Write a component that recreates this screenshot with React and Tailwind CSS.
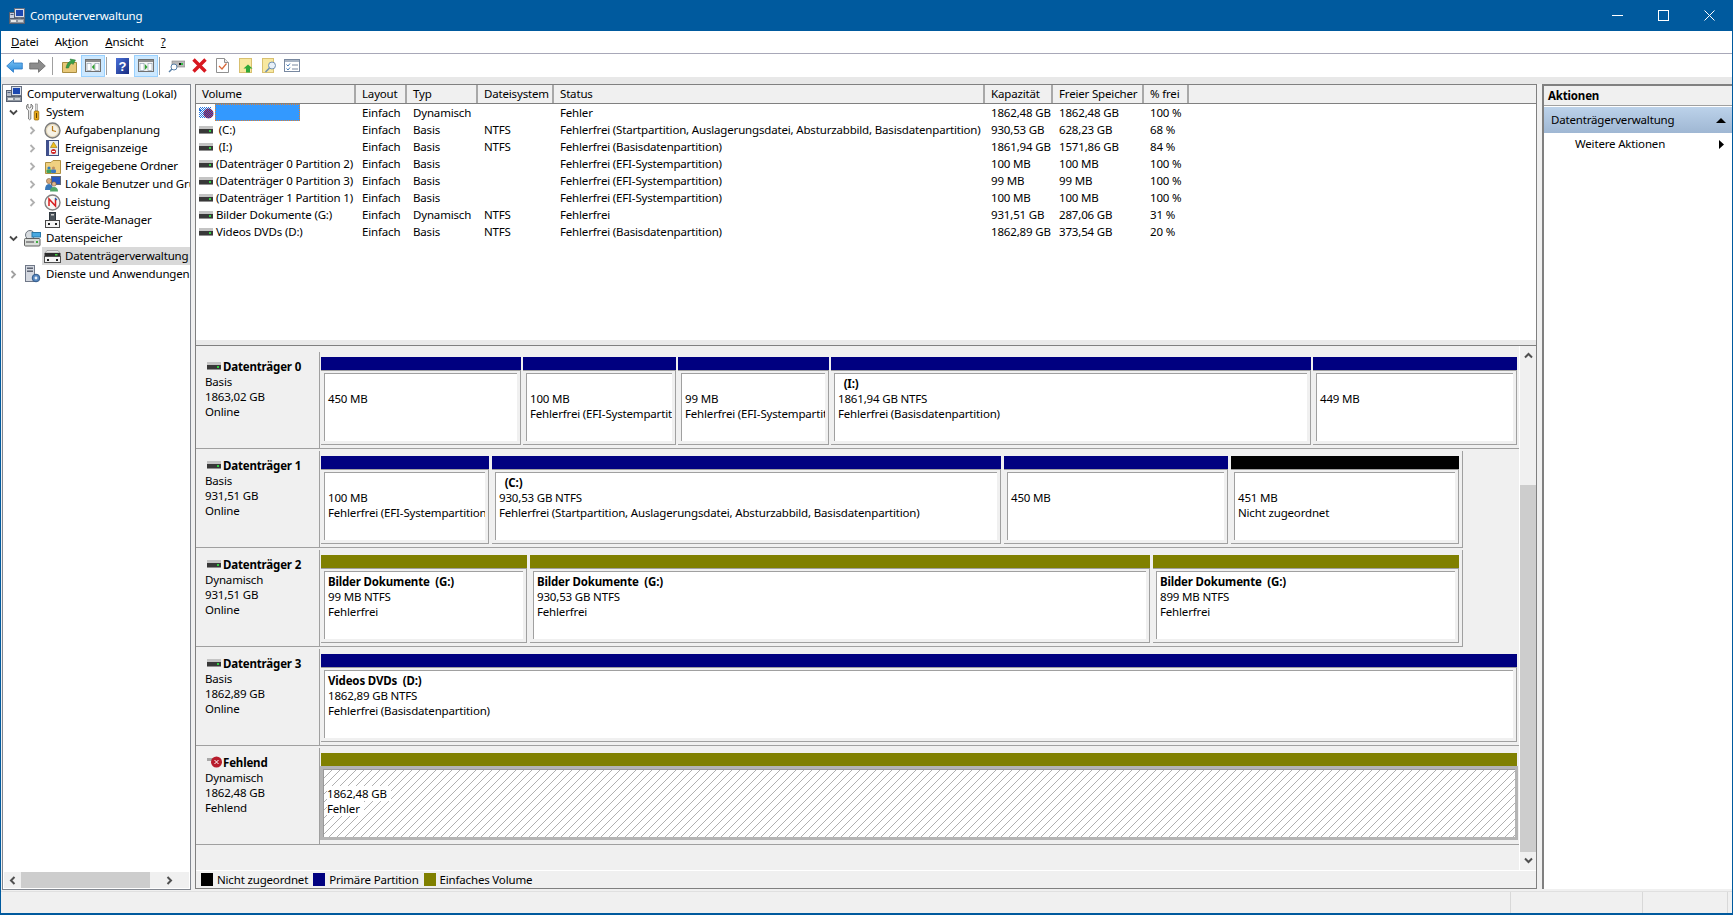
import React from 'react';

const Chevron = ({ open, dark }) => (
  <svg width="9" height="9" viewBox="0 0 9 9" className="shrink-0">
    {open ? (
      <polyline points="1,2.5 4.5,6 8,2.5" fill="none" stroke="#484848" strokeWidth="1.8" />
    ) : (
      <polyline points="2.5,1 6,4.5 2.5,8" fill="none" stroke={dark ? '#a0a0a0' : '#b0b0b0'} strokeWidth="1.8" />
    )}
  </svg>
);

const CompIcon = ({ light }) => (
  <svg width="16" height="16" viewBox="0 0 16 16" className="shrink-0">
    <rect x="5.5" y="0.5" width="10" height="9" fill="#d8e0ec" stroke="#687080" />
    <rect x="7" y="2" width="7" height="6" fill="#1c48b0" />
    <rect x="0.5" y="4.5" width="5" height="6" fill={light ? '#c8d0e0' : '#b8bec8'} stroke="#586070" />
    <rect x="1.5" y="6" width="3" height="1" fill="#506080" />
    <rect x="0.5" y="10.5" width="15" height="5" fill="#8e96a0" stroke="#586070" />
    <rect x="2" y="12" width="5" height="2" fill="#e8e8e8" />
    <rect x="9" y="12" width="5" height="2" fill="#d0d4d8" />
    <rect x="9" y="9.5" width="3" height="1.2" fill="#707880" />
  </svg>
);
const ToolsIcon = () => (
  <svg width="14" height="18" viewBox="0 0 14 18" className="shrink-0">
    <path d="M2 1 L2 4 L3.5 5 L5 4 L5 1 L6.8 3 L6.4 6 L4.8 7.5 L4.8 16 Q3.5 17.5 2.6 16 L2.6 7.5 L.8 6 L.4 3 Z" fill="#f0f0f0" stroke="#606060" strokeWidth=".8" />
    <rect x="9.5" y="1" width="2" height="7" fill="#d8d8d8" stroke="#808080" strokeWidth=".5" />
    <rect x="8.2" y="8" width="4.6" height="9" rx="1" fill="#e8a818" stroke="#906000" strokeWidth=".7" />
    <rect x="10" y="10" width="1" height="5" fill="#604000" />
  </svg>
);
const ClockIcon = () => (
  <svg width="17" height="17" viewBox="0 0 17 17" className="shrink-0">
    <circle cx="8.5" cy="8.5" r="7.5" fill="#e4d8bc" stroke="#7c7c7c" strokeWidth="1.4" />
    <circle cx="8.5" cy="8.5" r="5.5" fill="#f6f2e6" />
    <polyline points="8.5,4 8.5,8.5 12,9.5" fill="none" stroke="#b87818" strokeWidth="1.2" />
  </svg>
);
const LogIcon = () => (
  <svg width="15" height="16" viewBox="0 0 15 16" className="shrink-0">
    <rect x="1.5" y="0.5" width="12" height="15" fill="#e8ecf4" stroke="#405080" />
    <rect x="1.5" y="0.5" width="2.5" height="15" fill="#405090" />
    <path d="M8.5 2 L12 7.5 L5.5 7.5 Z" fill="#f0c020" stroke="#806000" strokeWidth=".5" />
    <circle cx="8.5" cy="11.5" r="2.5" fill="#d02828" />
    <rect x="7" y="11" width="3" height="1" fill="#fff" />
  </svg>
);
const SharedIcon = () => (
  <svg width="16" height="15" viewBox="0 0 16 15" className="shrink-0">
    <path d="M.5 3.5 L.5 14.5 L15.5 14.5 L15.5 1.5 L8 1.5 L6 3.5 Z" fill="#f0d080" stroke="#b09040" />
    <circle cx="4" cy="9" r="1.6" fill="#3080c0" />
    <rect x="1.5" y="10.5" width="5" height="3.5" rx="1" fill="#40a060" />
    <circle cx="8.5" cy="9" r="1.6" fill="#c09060" />
    <rect x="6" y="10.5" width="5" height="3.5" rx="1" fill="#3878c0" />
  </svg>
);
const UsersIcon = () => (
  <svg width="17" height="16" viewBox="0 0 17 16" className="shrink-0">
    <rect x="7.5" y="0.5" width="9" height="8" fill="#2858c0" stroke="#606878" />
    <circle cx="5" cy="5" r="2.6" fill="#d8a878" stroke="#705030" strokeWidth=".5" />
    <path d="M1 14 Q1 8 5 8 Q9 8 9 14 Z" fill="#3878b8" />
    <circle cx="10" cy="8" r="2.2" fill="#e0b890" stroke="#705030" strokeWidth=".5" />
    <path d="M6 15.5 Q6 11 10 11 Q14 11 14 15.5 Z" fill="#50a868" />
  </svg>
);
const GaugeIcon = () => (
  <svg width="17" height="17" viewBox="0 0 17 17" className="shrink-0">
    <circle cx="8.5" cy="8.5" r="7.5" fill="#f8f8f4" stroke="#808080" strokeWidth="1.4" />
    <path d="M5 12 L5 5 L11.5 12 L11.5 5" fill="none" stroke="#d82020" strokeWidth="1.5" />
    <path d="M11 4 L13 6" stroke="#2060c0" strokeWidth="1.2" />
  </svg>
);
const DeviceIcon = () => (
  <svg width="15" height="16" viewBox="0 0 15 16" className="shrink-0">
    <rect x="4.5" y="0.5" width="6" height="8" fill="#4c545c" stroke="#303840" />
    <rect x="6" y="2" width="3" height="1.5" fill="#d0d0d0" />
    <rect x="0.5" y="8.5" width="14" height="7" fill="#f4f4f4" stroke="#484848" />
    <rect x="3" y="11" width="2" height="2" fill="#202020" />
    <rect x="10" y="11" width="2" height="2" fill="#202020" />
  </svg>
);
const StorageIcon = () => (
  <svg width="17" height="17" viewBox="0 0 17 17" className="shrink-0">
    <circle cx="6" cy="5" r="4.5" fill="#d8dce0" stroke="#707880" />
    <rect x="8" y="2.5" width="8.5" height="4.5" fill="#48a8e0" stroke="#2878a8" />
    <rect x="0.5" y="8.5" width="15.5" height="7.5" rx="1" fill="#d8dcd8" stroke="#606060" />
    <rect x="2" y="11" width="8" height="2" fill="#909090" />
    <rect x="12" y="11" width="2" height="2" fill="#40b040" />
  </svg>
);
const DiskBig = () => (
  <svg width="17" height="13" viewBox="0 0 17 13" className="shrink-0">
    <path d="M3 .5 L14 .5 L16 3 L1 3 Z" fill="#e8e8e8" stroke="#909090" strokeWidth=".7" />
    <rect x="0.5" y="3" width="16" height="3.5" fill="#2c2c2c" />
    <rect x="11" y="4" width="2.5" height="1.5" fill="#40d040" />
    <rect x="0.5" y="6.5" width="16" height="6" fill="#f4f4f4" stroke="#505050" />
    <rect x="3" y="9" width="2" height="2" fill="#202020" />
    <rect x="12" y="9" width="2" height="2" fill="#202020" />
  </svg>
);
const ServicesIcon = () => (
  <svg width="17" height="18" viewBox="0 0 17 18" className="shrink-0">
    <rect x="1.5" y="0.5" width="9" height="16" fill="#d4d8e0" stroke="#707888" />
    <rect x="3" y="2.5" width="6" height="1.4" fill="#505868" />
    <rect x="3" y="5.5" width="6" height="1.4" fill="#505868" />
    <circle cx="12" cy="13" r="3.8" fill="#5888c0" stroke="#305888" />
    <circle cx="12" cy="13" r="1.4" fill="#e8f0f8" />
  </svg>
);
const Drive = () => (
  <svg width="14" height="8" viewBox="0 0 14 8" className="shrink-0">
    <rect x="0" y="0" width="14" height="3" fill="#c4c4c4" />
    <rect x="0" y="3" width="14" height="4" fill="#383838" />
    <rect x="0" y="7" width="14" height="1" fill="#909090" />
    <rect x="10" y="4" width="2" height="2" fill="#30d040" />
  </svg>
);
const MissingVol = () => (
  <svg width="16" height="14" viewBox="0 0 16 14" className="shrink-0">
    <defs>
      <pattern id="dith" width="2" height="2" patternUnits="userSpaceOnUse">
        <rect width="1" height="1" fill="#2878e0" />
        <rect x="1" y="1" width="1" height="1" fill="#2878e0" />
      </pattern>
      <pattern id="dith2" width="2" height="2" patternUnits="userSpaceOnUse">
        <rect width="2" height="2" fill="#a81430" />
        <rect x="1" width="1" height="1" fill="#3068d8" />
        <rect y="1" width="1" height="1" fill="#3068d8" />
      </pattern>
    </defs>
    <rect x="0" y="1" width="12" height="11" fill="url(#dith)" />
    <rect x="0" y="3" width="2" height="2" fill="#2878e0" />
    <circle cx="9.5" cy="7.5" r="5" fill="url(#dith2)" />
  </svg>
);
const MissingDisk = () => (
  <svg width="15" height="12" viewBox="0 0 15 12" className="shrink-0">
    <rect x="0" y="2" width="7" height="3" fill="#a8a8a8" />
    <circle cx="9.5" cy="6" r="5.5" fill="#b81c2c" />
    <path d="M7.5 4 L11.5 8 M11.5 4 L7.5 8" stroke="#fff" strokeWidth="1" />
  </svg>
);

const ToolBtn = ({ active, className = '', children }) => (
  <div className={`h-[22px] flex items-center justify-center ${active ? 'bg-[#cce8ff] border border-[#99d1ff]' : ''} ${className}`}>{children}</div>
);
const Sep = ({ className = '' }) => <div className={`w-px h-[18px] bg-[#a0a0a0] ${className}`} />;

const WindowGlyph = ({ dir }) => (
  <svg width="16" height="13" viewBox="0 0 16 13">
    <rect x=".5" y=".5" width="15" height="12" fill="#f4f4f4" stroke="#707070" />
    <rect x="1" y="1" width="14" height="2" fill="#8c8c8c" />
    <rect x="2" y="4.5" width="4" height="7" fill="#fff" stroke="#8898a8" strokeWidth=".6" />
    <rect x="10" y="4.5" width="4" height="7" fill="#fff" stroke="#8898a8" strokeWidth=".6" />
    {dir === 'l' ? <path d="M9.5 5 L6.8 8 L9.5 11 Z" fill="#30a030" /> : <path d="M6.8 5 L9.5 8 L6.8 11 Z" fill="#30a030" />}
  </svg>
);

const Toolbar = () => (
  <div className="h-[23px] bg-white flex items-center pl-[5px]">
    <svg width="17" height="14" viewBox="0 0 17 14">
      <defs>
        <linearGradient id="bl" x1="0" y1="0" x2="0" y2="1"><stop offset="0" stopColor="#7cc4f4" /><stop offset="1" stopColor="#2a88d8" /></linearGradient>
      </defs>
      <path d="M.7 7 L7.5 .7 L7.5 4 L16.3 4 L16.3 10 L7.5 10 L7.5 13.3 Z" fill="url(#bl)" stroke="#2878c8" strokeWidth=".8" />
    </svg>
    <svg width="17" height="14" viewBox="0 0 17 14" className="ml-[6px]">
      <path d="M16.3 7 L9.5 .7 L9.5 4 L.7 4 L.7 10 L9.5 10 L9.5 13.3 Z" fill="#8c8c8c" stroke="#686868" strokeWidth=".8" />
    </svg>
    <Sep className="ml-[6px]" />
    <svg width="15" height="15" viewBox="0 0 15 15" className="ml-[9px]">
      <path d="M.5 4.5 L.5 14.5 L14.5 14.5 L14.5 4.5 Z" fill="#e8c878" stroke="#a88c40" />
      <path d="M4 10 Q5 4 9 3 L8 1 L13.5 2 L11 6.5 L10 5 Q7.5 6 6.5 10 Z" fill="#38a048" stroke="#207030" strokeWidth=".5" />
    </svg>
    <ToolBtn active className="w-[24px] ml-[4px]"><WindowGlyph dir="l" /></ToolBtn>
    <Sep className="ml-[1px]" />
    <svg width="13" height="16" viewBox="0 0 13 16" className="ml-[9px]">
      <defs>
        <linearGradient id="hp" x1="0" y1="0" x2="1" y2="1"><stop offset="0" stopColor="#4a70d8" /><stop offset="1" stopColor="#182c80" /></linearGradient>
      </defs>
      <rect width="13" height="16" fill="url(#hp)" />
      <text x="6.5" y="12.5" textAnchor="middle" fontSize="13" fontWeight="700" fill="#fff" fontFamily="Liberation Sans">?</text>
    </svg>
    <ToolBtn active className="w-[24px] ml-[5px]"><WindowGlyph dir="r" /></ToolBtn>
    <Sep className="ml-[1px]" />
    <svg width="17" height="14" viewBox="0 0 17 14" className="ml-[8px]">
      <rect x="4" y="2" width="13" height="6" fill="#b8b8b8" stroke="#808080" strokeWidth=".6" />
      <rect x="11" y="4" width="4" height="2" fill="#101010" />
      <rect x="13" y="4" width="2" height="2" fill="#30c040" />
      <circle cx="6" cy="8" r="3" fill="#fff" stroke="#5880a8" />
      <path d="M4 10 L1 13" stroke="#5880a8" strokeWidth="1.5" />
    </svg>
    <svg width="15" height="15" viewBox="0 0 15 15" className="ml-[7px]">
      <path d="M1.5 1.5 L13.5 13.5 M13.5 1.5 L1.5 13.5" stroke="#d81820" strokeWidth="3.4" />
    </svg>
    <svg width="13" height="15" viewBox="0 0 13 15" className="ml-[9px]">
      <path d="M.5 .5 L8.5 .5 L12.5 4.5 L12.5 14.5 L.5 14.5 Z" fill="#fff" stroke="#909090" />
      <path d="M8.5 .5 L8.5 4.5 L12.5 4.5" fill="#e8e8e8" stroke="#909090" />
      <path d="M3 8 L6 11 L10.5 5.5" fill="none" stroke="#d86838" strokeWidth="1.2" />
    </svg>
    <svg width="14" height="15" viewBox="0 0 14 15" className="ml-[10px]">
      <rect x=".5" y=".5" width="12" height="14" fill="#f8e8a0" stroke="#d8c070" />
      <path d="M9 6.5 L13.5 10.5 L11 10.5 L11 14.5 L7 14.5 L7 10.5 L4.5 10.5 Z" fill="#30a838" />
    </svg>
    <svg width="15" height="15" viewBox="0 0 15 15" className="ml-[9px]">
      <rect x=".5" y=".5" width="11" height="14" fill="#f8e8a0" stroke="#d8c070" />
      <circle cx="10" cy="7.5" r="3.5" fill="#e8f0f8" stroke="#7090b0" />
      <path d="M7.5 10 L3.5 14" stroke="#7090b0" strokeWidth="1.6" />
    </svg>
    <svg width="16" height="13" viewBox="0 0 16 13" className="ml-[7px]">
      <rect x=".5" y=".5" width="15" height="12" fill="#fff" stroke="#7888a0" />
      <rect x="1" y="1" width="14" height="2" fill="#a8b4c4" />
      <path d="M2.5 5.5 L4 7 L6 4.5 M2.5 9.5 L4 11 L6 8.5" fill="none" stroke="#3870b0" strokeWidth=".9" />
      <path d="M8 6 L14 6 M8 10 L14 10" stroke="#7888a0" />
    </svg>
  </div>
);

const treeRows = [
  { lvl: 0, icon: <CompIcon />, text: 'Computerverwaltung (Lokal)' },
  { lvl: 1, open: true, icon: <ToolsIcon />, text: 'System' },
  { lvl: 2, exp: true, icon: <ClockIcon />, text: 'Aufgabenplanung' },
  { lvl: 2, exp: true, icon: <LogIcon />, text: 'Ereignisanzeige' },
  { lvl: 2, exp: true, icon: <SharedIcon />, text: 'Freigegebene Ordner' },
  { lvl: 2, exp: true, icon: <UsersIcon />, text: 'Lokale Benutzer und Gruppen' },
  { lvl: 2, exp: true, icon: <GaugeIcon />, text: 'Leistung' },
  { lvl: 2, icon: <DeviceIcon />, text: 'Geräte-Manager' },
  { lvl: 1, open: true, icon: <StorageIcon />, text: 'Datenspeicher' },
  { lvl: 2, sel: true, icon: <DiskBig />, text: 'Datenträgerverwaltung' },
  { lvl: 1, exp: true, icon: <ServicesIcon />, text: 'Dienste und Anwendungen' },
];

const TreeRow = ({ r }) => {
  if (r.lvl === 0)
    return (
      <div className="h-[18px] flex items-center pl-[3px] gap-[5px] whitespace-nowrap">
        {r.icon}
        <span>{r.text}</span>
      </div>
    );
  if (r.lvl === 1)
    return (
      <div className="h-[18px] flex items-center pl-[6px] whitespace-nowrap overflow-hidden">
        <div className="w-[9px] shrink-0">{r.open ? <Chevron open /> : <Chevron dark />}</div>
        <div className="w-[17px] ml-[6px] shrink-0 flex justify-center">{r.icon}</div>
        <span className="ml-[5px]">{r.text}</span>
      </div>
    );
  return (
    <div className="h-[18px] flex items-center pl-[25px] whitespace-nowrap overflow-hidden">
      <div className="w-[9px] shrink-0">{r.exp && <Chevron />}</div>
      <div className={`flex items-center h-[18px] flex-1 min-w-0 ml-[5px] ${r.sel ? 'bg-[#d9d9d9]' : ''} pl-[2px]`}>
        <div className="w-[17px] shrink-0 flex justify-center">{r.icon}</div>
        <span className="ml-[4px]">{r.text}</span>
      </div>
    </div>
  );
};

const cols = [
  ['Volume', 'w-[160px]'],
  ['Layout', 'w-[51px]'],
  ['Typ', 'w-[71px]'],
  ['Dateisystem', 'w-[76px]'],
  ['Status', 'w-[431px]'],
  ['Kapazität', 'w-[68px]'],
  ['Freier Speicher', 'w-[91px]'],
  ['% frei', 'w-[45px]'],
];

const FE = 'Fehlerfrei (EFI-Systempartition)';
const FB = 'Fehlerfrei (Basisdatenpartition)';
const rows = [
  [null, 'Einfach', 'Dynamisch', '', 'Fehler', '1862,48 GB', '1862,48 GB', '100 %'],
  ['\u00A0(C:)', 'Einfach', 'Basis', 'NTFS', 'Fehlerfrei (Startpartition, Auslagerungsdatei, Absturzabbild, Basisdatenpartition)', '930,53 GB', '628,23 GB', '68 %'],
  ['\u00A0(I:)', 'Einfach', 'Basis', 'NTFS', FB, '1861,94 GB', '1571,86 GB', '84 %'],
  ['(Datenträger 0 Partition 2)', 'Einfach', 'Basis', '', FE, '100 MB', '100 MB', '100 %'],
  ['(Datenträger 0 Partition 3)', 'Einfach', 'Basis', '', FE, '99 MB', '99 MB', '100 %'],
  ['(Datenträger 1 Partition 1)', 'Einfach', 'Basis', '', FE, '100 MB', '100 MB', '100 %'],
  ['Bilder Dokumente (G:)', 'Einfach', 'Dynamisch', 'NTFS', 'Fehlerfrei', '931,51 GB', '287,06 GB', '31 %'],
  ['Videos DVDs (D:)', 'Einfach', 'Basis', 'NTFS', FB, '1862,89 GB', '373,54 GB', '20 %'],
];

const TopList = () => (
  <div className="h-[255px] bg-white overflow-hidden">
    <div className="h-[19px] flex bg-[#f0f0f0] border-b border-[#808080]">
      {cols.map(([t, w]) => (
        <div key={t} className={`${w} pl-[6px] leading-[18px] border-r-2 border-[#a8a8a8] whitespace-nowrap overflow-hidden`}>{t}</div>
      ))}
    </div>
    {rows.map((r, i) => (
      <div key={i} className="h-[17px] flex items-center whitespace-nowrap">
        <div className={`${cols[0][1]} flex items-center pl-[3px] shrink-0`}>
          {r[0] === null ? (
            <>
              <MissingVol />
              <div className="w-[85px] h-[17px] bg-[#3399ff] border border-dotted border-[#e08030]" />
            </>
          ) : (
            <>
              <Drive />
              <span className="ml-[3px]">{r[0]}</span>
            </>
          )}
        </div>
        {r.slice(1).map((c, j) => (
          <div key={j} className={`${cols[j + 1][1]} pl-[6px] shrink-0`}>{c}</div>
        ))}
      </div>
    ))}
  </div>
);

const NAVY = 'bg-[#000080]';
const OLIVE = 'bg-[#808000]';
const disks = [
  {
    name: 'Datenträger 0', l: ['Basis', '1863,02 GB', 'Online'], gap: 'gap-[2px]', rowW: 'w-[1324px]',
    parts: [
      { w: 'w-[200px]', c: NAVY, t: ['', '450 MB'] },
      { w: 'w-[153px]', c: NAVY, t: ['', '100 MB', 'Fehlerfrei (EFI-Systempartition)'] },
      { w: 'w-[151px]', c: NAVY, t: ['', '99 MB', 'Fehlerfrei (EFI-Systempartition)'] },
      { w: 'w-[480px]', c: NAVY, b: '\u00A0\u00A0(I:)', t: ['1861,94 GB NTFS', FB] },
      { w: 'w-[204px]', c: NAVY, t: ['', '449 MB'] },
    ],
  },
  {
    name: 'Datenträger 1', l: ['Basis', '931,51 GB', 'Online'], gap: 'gap-[3px]', rowW: 'w-[1267px]',
    parts: [
      { w: 'w-[168px]', c: NAVY, t: ['', '100 MB', 'Fehlerfrei (EFI-Systempartition)'] },
      { w: 'w-[509px]', c: NAVY, b: '\u00A0\u00A0(C:)', t: ['930,53 GB NTFS', 'Fehlerfrei (Startpartition, Auslagerungsdatei, Absturzabbild, Basisdatenpartition)'] },
      { w: 'w-[224px]', c: NAVY, t: ['', '450 MB'] },
      { w: 'w-[228px]', c: 'bg-black', t: ['', '451 MB', 'Nicht zugeordnet'] },
    ],
  },
  {
    name: 'Datenträger 2', l: ['Dynamisch', '931,51 GB', 'Online'], gap: 'gap-[3px]', rowW: 'w-[1267px]',
    parts: [
      { w: 'w-[206px]', c: OLIVE, b: 'Bilder Dokumente\u00A0\u00A0(G:)', t: ['99 MB NTFS', 'Fehlerfrei'] },
      { w: 'w-[620px]', c: OLIVE, b: 'Bilder Dokumente\u00A0\u00A0(G:)', t: ['930,53 GB NTFS', 'Fehlerfrei'] },
      { w: 'w-[306px]', c: OLIVE, b: 'Bilder Dokumente\u00A0\u00A0(G:)', t: ['899 MB NTFS', 'Fehlerfrei'] },
    ],
  },
  {
    name: 'Datenträger 3', l: ['Basis', '1862,89 GB', 'Online'], gap: 'gap-[2px]', rowW: 'w-[1324px]',
    parts: [{ w: 'w-[1196px]', c: NAVY, b: 'Videos DVDs\u00A0\u00A0(D:)', t: ['1862,89 GB NTFS', FB] }],
  },
];

const Part = ({ p }) => (
  <div className={`${p.w} flex flex-col shrink-0`}>
    <div className={`h-[13px] ${p.c}`} />
    <div className="h-[75px] bg-[#f0f0f0] border-t border-r border-b border-[#a0a0a0] pl-[3px] pr-[3px] pt-[2px] pb-[3px]">
      <div className="h-full bg-white border-t border-l border-[#a0a0a0] pl-[3px] pt-[2px] overflow-hidden whitespace-nowrap leading-[15px]">
        {p.b && <div className="font-bold">{p.b}</div>}
        {p.t.map((x, i) => (
          <div key={i} className="h-[15px]">{x}</div>
        ))}
      </div>
    </div>
  </div>
);

const Label = ({ icon, name, l }) => (
  <div className="w-[124px] shrink-0 bg-[#f0f0f0] border-r border-[#a0a0a0] pl-[9px] pt-[7px] leading-[15px]">
    <div className="flex items-center gap-[1px] font-bold h-[15px] whitespace-nowrap ml-[2px]">
      <div className="w-[15px] flex justify-start">{icon}</div>
      <span>{name}</span>
    </div>
    {l.map((x) => (
      <div key={x} className="h-[15px]">{x}</div>
    ))}
  </div>
);

const DiskRow = ({ d }) => (
  <div className={`${d.rowW} h-[97px] mb-[2px] flex border-b border-[#a0a0a0] ${d.rowW === 'w-[1267px]' ? 'border-r' : ''}`}>
    <Label icon={<Drive />} name={d.name} l={d.l} />
    <div className={`flex pl-[1px] pt-[5px] ${d.gap}`}>
      {d.parts.map((p, i) => (
        <Part key={i} p={p} />
      ))}
    </div>
  </div>
);

const MissingRow = () => (
  <div className="w-[1324px] h-[97px] flex border-b border-[#a0a0a0]">
    <Label icon={<MissingDisk />} name="Fehlend" l={['Dynamisch', '1862,48 GB', 'Fehlend']} />
    <div className="pl-[1px] pt-[5px] w-[1197px] flex flex-col">
      <div className={`h-[13px] ${OLIVE}`} />
      <div className="h-[74px] w-[1198px] bg-[#b4b4b4] p-[3px] -ml-[1px]">
        <div className="h-full border-t border-l border-[#999] bg-white bg-[linear-gradient(135deg,transparent_46%,#b0b0b0_46%,#b0b0b0_54%,transparent_54%)] bg-[length:8px_8px] pl-[3px] pt-[16px] leading-[15px]">
          <div><span className="bg-white pr-[4px] inline-block">1862,48 GB</span></div>
          <div><span className="bg-white pr-[4px] inline-block">Fehler</span></div>
        </div>
      </div>
    </div>
  </div>
);

const Arrow = ({ up }) => (
  <svg width="9" height="7" viewBox="0 0 9 7">
    {up ? (
      <polyline points="1,5.5 4.5,2 8,5.5" fill="none" stroke="#505050" strokeWidth="2" />
    ) : (
      <polyline points="1,1.5 4.5,5 8,1.5" fill="none" stroke="#505050" strokeWidth="2" />
    )}
  </svg>
);

const Legend = ({ c, t }) => (
  <div className="flex items-center">
    <div className={`w-[12px] h-[13px] ${c}`} />
    <span className="ml-[4px]">{t}</span>
  </div>
);

export default function App() {
  return (
    <div className="w-[1733px] h-[915px] flex flex-col overflow-hidden bg-[#f0f0f0] border-x border-b-2 border-[#005a9e] text-black text-[11.5px] tracking-[-0.17px] font-['Noto_Sans',sans-serif]">
      <div className="h-[31px] -mx-px bg-[#005a9e] flex items-center text-white pl-[9px] shrink-0">
        <CompIcon light />
        <span className="ml-[5px]">Computerverwaltung</span>
        <div className="ml-auto flex items-center">
          <svg width="11" height="11" viewBox="0 0 11 11" className="mr-[35px]"><path d="M0 5.5 H11" stroke="#fff" /></svg>
          <svg width="11" height="11" viewBox="0 0 11 11" className="mr-[35px]"><rect x=".5" y=".5" width="10" height="10" fill="none" stroke="#fff" /></svg>
          <svg width="11" height="11" viewBox="0 0 11 11" className="mr-[18px]"><path d="M.5 .5 L10.5 10.5 M10.5 .5 L.5 10.5" stroke="#fff" /></svg>
        </div>
      </div>
      <div className="h-[23px] bg-white border-b border-[#a8a8b8] flex items-center shrink-0 pl-[10px]">
        <span><u>D</u>atei</span>
        <span className="ml-[16px]">Ak<u>t</u>ion</span>
        <span className="ml-[17px]"><u>A</u>nsicht</span>
        <span className="ml-[17px]"><u>?</u></span>
      </div>
      <Toolbar />
      <div className="h-[7px] bg-[#e8e8e8] shrink-0" />
      <div className="flex-1 flex min-h-0 pl-px">
        <div className="w-[189px] h-[806px] bg-white border border-[#828790] flex flex-col">
          <div className="flex-1 overflow-hidden">
            {treeRows.map((r, i) => (
              <TreeRow key={i} r={r} />
            ))}
          </div>
          <div className="h-[16px] bg-[#f0f0f0] mx-px mb-[1px] flex items-center">
            <div className="w-[17px] flex justify-center"><svg width="7" height="9" viewBox="0 0 7 9"><polyline points="5.5,1 2,4.5 5.5,8" fill="none" stroke="#505050" strokeWidth="2" /></svg></div>
            <div className="h-full w-[129px] bg-[#cdcdcd]" />
            <div className="flex-1 flex justify-center"><svg width="7" height="9" viewBox="0 0 7 9"><polyline points="1.5,1 5,4.5 1.5,8" fill="none" stroke="#505050" strokeWidth="2" /></svg></div>
          </div>
        </div>
        <div className="w-[1342px] h-[805px] ml-[4px] flex flex-col border-t border-x border-b border-[#808080]">
          <TopList />
          <div className="h-[5px] bg-[#eaeaea]" />
          <div className="h-px bg-[#808080]" />
          <div className="h-[524px] flex overflow-hidden">
            <div className="w-[1323px] pt-[6px] overflow-hidden">
              {disks.map((d) => (
                <DiskRow key={d.name} d={d} />
              ))}
              <MissingRow />
            </div>
            <div className="w-[17px] flex flex-col bg-[#f0f0f0] border-l border-white">
              <div className="h-[139px] flex justify-center pt-[6px]"><Arrow up /></div>
              <div className="h-[367px] bg-[#cdcdcd]" />
              <div className="flex-1 flex items-center justify-center"><Arrow /></div>
            </div>
          </div>
          <div className="flex-1 bg-[#f0f0f0] border-t border-white flex items-center gap-[5px] pl-[5px]">
            <Legend c="bg-black" t="Nicht zugeordnet" />
            <Legend c="bg-[#000080]" t="Primäre Partition" />
            <Legend c="bg-[#808000]" t="Einfaches Volume" />
          </div>
        </div>
        <div className="w-[190px] h-[805px] ml-[5px] bg-white border-t-2 border-l-2 border-[#808080] flex flex-col">
          <div className="h-[20px] bg-[#f0f0f0] border-b border-[#a0a0a0] font-bold pl-[4px] leading-[19px]">Aktionen</div>
          <div className="h-[26px] bg-gradient-to-b from-[#bcd2ea] to-[#9fb7d3] flex items-center pl-[7px] pr-[6px] mt-px">
            <span>Datenträgerverwaltung</span>
            <svg width="10" height="5" viewBox="0 0 10 5" className="ml-auto"><path d="M5 0 L10 5 L0 5 Z" fill="#000" /></svg>
          </div>
          <div className="h-[22px] flex items-center pl-[31px] pr-[8px]">
            <span>Weitere Aktionen</span>
            <svg width="5" height="9" viewBox="0 0 5 9" className="ml-auto"><path d="M0 0 L5 4.5 L0 9 Z" fill="#000" /></svg>
          </div>
        </div>
      </div>
      <div className="h-[22px] shrink-0 flex border-t border-[#e0e0e0] mt-px">
        <div className="w-[1510px] border-r border-[#d8d8d8]" />
        <div className="w-[132px] border-r border-[#d8d8d8]" />
        <div className="w-[85px] border-r border-[#d8d8d8]" />
      </div>
    </div>
  );
}
